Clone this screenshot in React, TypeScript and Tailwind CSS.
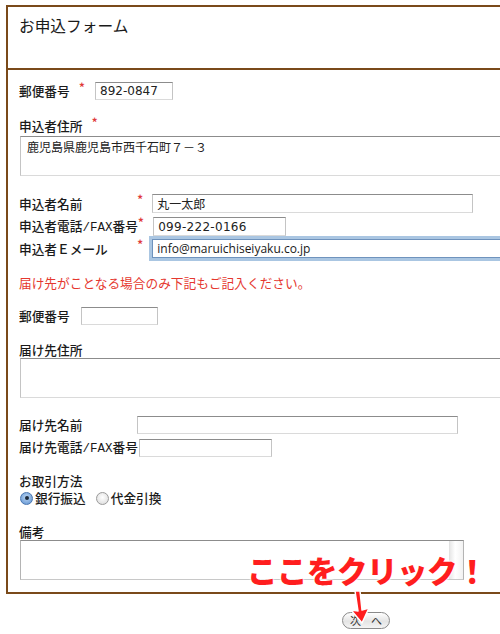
import React from "react";

const inputCls =
  "bg-white border border-t-[#8c8c8c] border-x-[#c4c4c4] border-b-[#dadada] px-[4px] text-[12px] leading-none text-[#222] flex items-center";

const Star = () => (
  <span className="text-[#e03a3a] text-[13px] leading-none -translate-y-[4px]">*</span>
);

const Tel = () => (
  <>
    電話<span className="font-['Liberation_Mono',monospace] text-[12.5px]">/FAX</span>番号
  </>
);

const Radio = ({ checked }: { checked?: boolean }) =>
  checked ? (
    <span className="w-[13px] h-[13px] rounded-full border border-[#4a76b0] bg-[radial-gradient(circle_at_50%_40%,#bcd6f2,#5a8fd0)] flex items-center justify-center">
      <span className="w-[4px] h-[4px] rounded-full bg-[#1c2a3c]" />
    </span>
  ) : (
    <span className="block w-[13px] h-[13px] rounded-full border border-[#9a9a9a] bg-[radial-gradient(circle_at_50%_40%,#ffffff,#d8d8d8)]" />
  );

export default function App() {
  return (
    <div className="relative w-[500px] h-[634px] overflow-hidden bg-white font-['Noto_Sans_CJK_JP',sans-serif] text-[#1a1a1a]">
      <div className="ml-[6px] mt-[5px] w-[560px] border-2 border-[#7a4a1a]">
        <div className="h-[63px] pl-[11px] pt-[8px] text-[15.7px] leading-[22px] border-b-2 border-[#7a4a1a]">
          お申込フォーム
        </div>
        <div className="pl-[11px] pb-[12px] text-[12.7px] font-medium">
          <div className="mt-[12px] h-[18px] flex items-center">
            <span>郵便番号</span>
            <span className="ml-[9px] flex"><Star /></span>
            <div className={`${inputCls} ml-[10px] w-[78px] h-[18px] font-['DejaVu_Sans',sans-serif] text-[11.5px] font-normal`}>892-0847</div>
          </div>

          <div className="mt-[18px] leading-[16px] flex items-center">
            <span>申込者住所</span>
            <span className="ml-[9px] flex"><Star /></span>
          </div>
          <div className={`${inputCls} !items-start pt-[4px] ml-[1px] mt-[2px] w-[540px] h-[40px] px-[6px] font-normal`}>
            鹿児島県鹿児島市西千石町７－３
          </div>

          <div className="mt-[18px] h-[19px] flex items-center">
            <span className="w-[118px]">申込者名前</span>
            <Star />
            <div className={`${inputCls} ml-[9px] w-[321px] h-[19px] font-normal`}>丸一太郎</div>
          </div>
          <div className="mt-[4px] h-[19px] flex items-center">
            <span className="min-w-[118px]">
              申込者<Tel />
            </span>
            <Star />
            <div className={`${inputCls} ml-[9px] w-[133px] h-[19px] font-['DejaVu_Sans',sans-serif] text-[11.5px] tracking-[0.3px] font-normal`}>099-222-0166</div>
          </div>
          <div className="mt-[3px] h-[19px] flex items-center">
            <span className="w-[118px]">申込者Ｅメール</span>
            <Star />
            <div className="ml-[9px] w-[400px] h-[19px] bg-white border border-[#6f93bd] shadow-[0_0_0_3px_#aac6e2] px-[4px] flex items-center text-[12px] leading-none font-normal font-['Open_Sans',sans-serif]">
              info@maruichiseiyaku.co.jp
            </div>
          </div>

          <div className="mt-[17px] leading-[16px] text-[#e5382f] font-normal">
            届け先がことなる場合のみ下記もご記入ください。
          </div>

          <div className="mt-[16px] h-[18px] flex items-center">
            <span>郵便番号</span>
            <div className={`${inputCls} ml-[11px] w-[77px] h-[18px]`} />
          </div>

          <div className="mt-[17px] leading-[16px]">届け先住所</div>
          <div className={`${inputCls} ml-[1px] w-[540px] h-[40px]`} />

          <div className="mt-[18px] h-[18px] flex items-center">
            <span className="w-[118px]">届け先名前</span>
            <div className={`${inputCls} w-[321px] h-[18px]`} />
          </div>
          <div className="mt-[5px] h-[18px] flex items-center">
            <span className="min-w-[118px]">
              届け先<Tel />
            </span>
            <div className={`${inputCls} ml-[1px] w-[133px] h-[18px]`} />
          </div>

          <div className="mt-[16px] leading-[16px]">お取引方法</div>
          <div className="mt-[1px] leading-[16px] flex items-center">
            <span className="ml-[1px]"><Radio checked /></span>
            <span className="ml-[2px]">銀行振込</span>
            <span className="ml-[10px]"><Radio /></span>
            <span className="ml-[2px]">代金引換</span>
          </div>

          <div className="mt-[18px] leading-[16px]">備考</div>
          <div className="ml-[1px] w-[444px] h-[40px] flex bg-white border border-t-[#8c8c8c] border-x-[#b4b4b4] border-b-[#c8c8c8]">
            <div className="flex-1" />
            <div className="w-[14px] h-full bg-[linear-gradient(to_right,#e8e8e8,#ffffff_40%,#f2f2f2)] border-l border-[#e2e2e2]" />
          </div>
        </div>
      </div>

      <div className="ml-[342px] mt-[18px] w-[48px] h-[17px] rounded-full border border-[#8a8a8a] bg-[linear-gradient(to_bottom,#ffffff,#e4e4e4_55%,#f4f4f4)] flex items-center justify-center gap-[10px] text-[11px] leading-none text-[#333]">
        <span>次</span>
        <span>へ</span>
      </div>

      <div className="absolute left-[247px] top-[555px] text-[30.5px] leading-none font-black tracking-[-0.5px] text-[#ff1e1e] [text-shadow:0_0_2px_#fff,0_0_2px_#fff,0_0_3px_#fff]">
        ここをクリック！
      </div>
      <svg className="absolute left-[344px] top-[589px]" width="30" height="36" viewBox="0 0 30 36">
        <path
          d="M11 2 L14 22 L7 21 L18 34 L25 19 L18 21 L16 2 Z"
          fill="#ff1e1e"
          stroke="#ffffff"
          strokeWidth="1.5"
          strokeLinejoin="round"
        />
      </svg>
    </div>
  );
}
